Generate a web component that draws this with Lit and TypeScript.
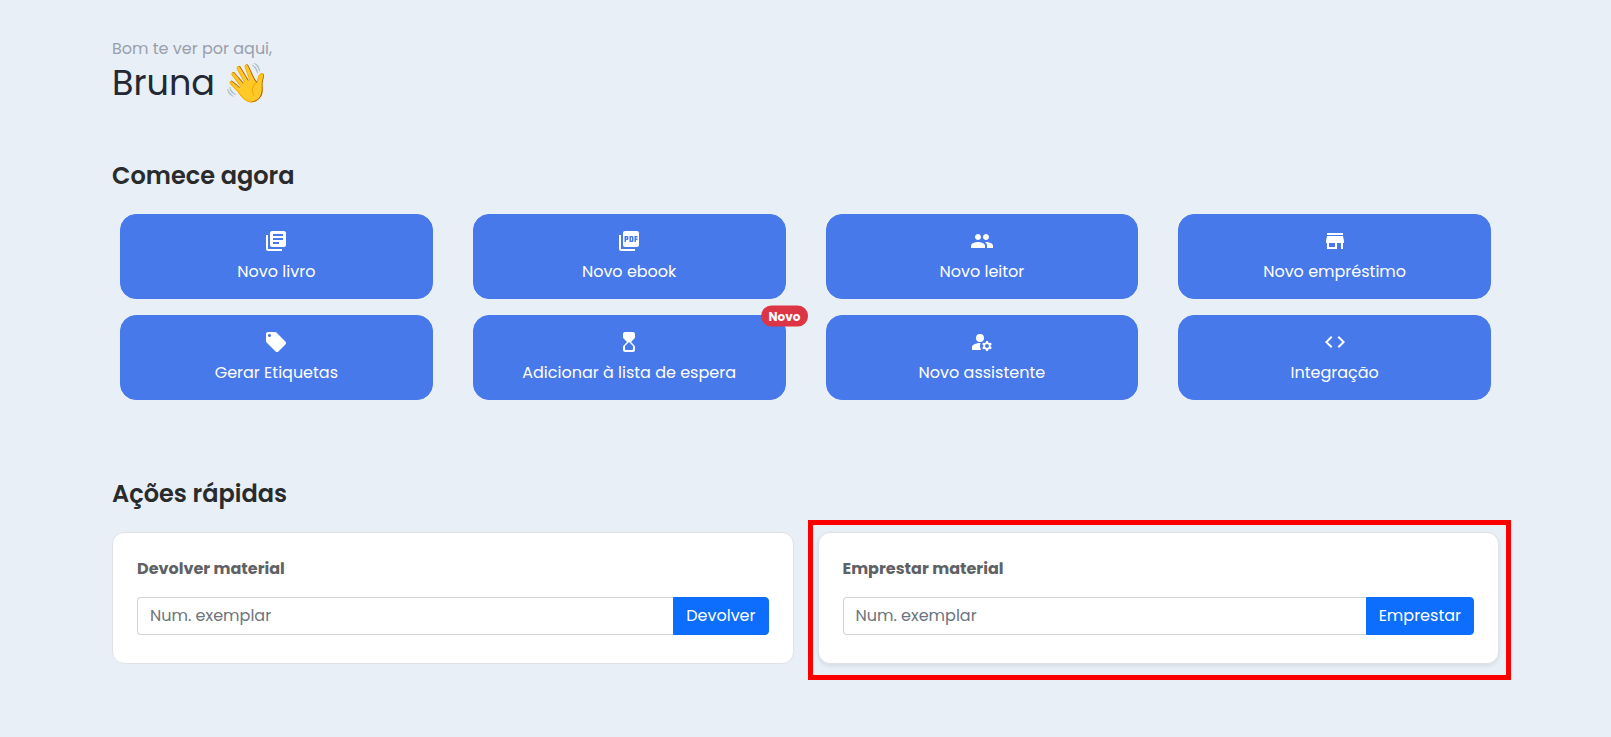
import { LitElement, html, css } from "lit";
import { customElement, property } from "lit/decorators.js";

interface Shortcut {
  label: string;
  icon: string;
  badge?: string;
}

const shortcuts: Shortcut[] = [
  {
    label: "Novo livro",
    icon: "M4 6H2v14c0 1.1.9 2 2 2h14v-2H4V6zM20 2H8c-1.1 0-2 .9-2 2v12c0 1.1.9 2 2 2h12c1.1 0 2-.9 2-2V4c0-1.1-.9-2-2-2zm-1 9H9V9h10v2zm-4 4H9v-2h6v2zm4-8H9V5h10v2z",
  },
  {
    label: "Novo ebook",
    icon: "M20 2H8c-1.1 0-2 .9-2 2v12c0 1.1.9 2 2 2h12c1.1 0 2-.9 2-2V4c0-1.1-.9-2-2-2zm-8.5 7.5c0 .83-.67 1.5-1.5 1.5H9v2H7.5V7H10c.83 0 1.5.67 1.5 1.5v1zm5 2c0 .83-.67 1.5-1.5 1.5h-2.5V7H15c.83 0 1.5.67 1.5 1.5v3zm4-3H19v1h1.5V11H19v2h-1.5V7h3v1.5zM9 9.5h1v-1H9v1zM4 6H2v14c0 1.1.9 2 2 2h14v-2H4V6zm10 5.5h1v-3h-1v3z",
  },
  {
    label: "Novo leitor",
    icon: "M16 11c1.66 0 2.99-1.34 2.99-3S17.66 5 16 5c-1.66 0-3 1.34-3 3s1.34 3 3 3zm-8 0c1.66 0 2.99-1.34 2.99-3S9.66 5 8 5C6.34 5 5 6.34 5 8s1.34 3 3 3zm0 2c-2.33 0-7 1.17-7 3.5V19h14v-2.5c0-2.33-4.67-3.5-7-3.5zm8 0c-.29 0-.62.02-.97.05 1.16.84 1.97 1.97 1.97 3.45V19h6v-2.5c0-2.33-4.67-3.5-7-3.5z",
  },
  {
    label: "Novo empréstimo",
    icon: "M20 4H4v2h16V4zm1 10v-2l-1-5H4l-1 5v2h1v6h10v-6h4v6h2v-6h1zm-9 4H6v-4h6v4z",
  },
  {
    label: "Gerar Etiquetas",
    icon: "M21.41 11.58l-9-9C12.05 2.22 11.55 2 11 2H4c-1.1 0-2 .9-2 2v7c0 .55.22 1.05.59 1.42l9 9c.36.36.86.58 1.41.58.55 0 1.05-.22 1.41-.59l7-7c.37-.36.59-.86.59-1.41 0-.55-.23-1.06-.59-1.42zM5.5 7C4.67 7 4 6.33 4 5.5S4.67 4 5.5 4 7 4.67 7 5.5 6.33 7 5.5 7z",
  },
  {
    label: "Adicionar à lista de espera",
    icon: "M8 22h8c1.1 0 2-.9 2-2l-.01-3.18c0-.53-.21-1.03-.58-1.41L14 12l3.41-3.43c.37-.37.58-.88.58-1.41L18 4c0-1.1-.9-2-2-2H8c-1.1 0-2 .9-2 2v3.16c0 .53.21 1.04.58 1.42L10 12l-3.41 3.4c-.38.38-.59.89-.59 1.42V20c0 1.1.9 2 2 2zm0-5.91l4-4 4 4V19c0 .55-.45 1-1 1H9c-.55 0-1-.45-1-1v-2.91z",
    badge: "Novo",
  },
  {
    label: "Novo assistente",
    icon: "M14 8a4 4 0 1 1-8 0a4 4 0 1 1 8 0zM10.67 13.02C10.45 13.01 10.23 13 10 13c-2.42 0-4.68.67-6.61 1.82-.88.52-1.39 1.5-1.39 2.53V20h9.26c-.79-1.13-1.26-2.51-1.26-4 0-1.07.25-2.07.67-2.98zM20.75 16c0-.22-.03-.42-.06-.63l1.14-1.01-1-1.73-1.45.49c-.32-.27-.68-.48-1.08-.63L18 11h-2l-.3 1.49c-.4.15-.76.36-1.08.63l-1.45-.49-1 1.73 1.14 1.01c-.03.21-.06.41-.06.63s.03.42.06.63l-1.14 1.01 1 1.73 1.45-.49c.32.27.68.48 1.08.63L16 21h2l.3-1.49c.4-.15.76-.36 1.08-.63l1.45.49 1-1.73-1.14-1.01c.03-.21.06-.41.06-.63zM17 18c-1.1 0-2-.9-2-2s.9-2 2-2 2 .9 2 2-.9 2-2 2z",
  },
  {
    label: "Integração",
    icon: "M9.4 16.6L4.8 12l4.6-4.6L8 6l-6 6 6 6 1.4-1.4zm5.2 0l4.6-4.6-4.6-4.6L16 6l6 6-6 6-1.4-1.4z",
  },
];

@customElement("shortcut-tile")
export class ShortcutTile extends LitElement {
  @property() label = "";
  @property() icon = "";
  @property() badge = "";

  static styles = css`
    :host {
      display: block;
    }
    .tile {
      position: relative;
      display: flex;
      flex-direction: column;
      align-items: center;
      gap: 7px;
      width: 100%;
      padding: 14px 15px;
      border: 1px solid #4779eb;
      border-radius: 16px;
      background: #4779eb;
      color: #fff;
      font: inherit;
      cursor: pointer;
    }
    .icon {
      width: 24px;
      height: 24px;
      fill: currentColor;
    }
    .badge {
      position: absolute;
      top: 0;
      left: 100%;
      transform: translate(-50%, -50%);
      padding: 4px 8px;
      border-radius: 16px;
      background: #dc3545;
      font-size: 12px;
      line-height: 13px;
      font-weight: 700;
    }
  `;

  render() {
    return html`<button class="tile" type="button">
      <svg class="icon" viewBox="0 0 24 24" aria-hidden="true"><path d=${this.icon} /></svg>
      <span>${this.label}</span>
      ${this.badge ? html`<span class="badge">${this.badge}</span>` : null}
    </button>`;
  }
}

@customElement("quick-action")
export class QuickAction extends LitElement {
  @property() heading = "";
  @property() action = "";
  @property({ type: Boolean, reflect: true }) active = false;

  static styles = css`
    :host {
      display: block;
      position: relative;
    }
    .card {
      display: flex;
      flex-direction: column;
      gap: 16px;
      padding: 24px 24px 28px;
      border: 1px solid #dee2e6;
      border-radius: 12px;
      background: #fff;
    }
    :host([active]) .card {
      box-shadow: 0 2px 4px rgba(0, 0, 0, 0.08);
    }
    :host([active])::after {
      content: "";
      position: absolute;
      inset: -12px -12px -16px -10px;
      border: 5px solid #fb0000;
      pointer-events: none;
    }
    .heading {
      color: #5f6265;
      font-weight: 700;
    }
    .group {
      display: flex;
    }
    .field {
      flex: 1;
      min-width: 0;
      padding: 6px 12px;
      border: 1px solid #ced4da;
      border-right: 0;
      border-radius: 4px 0 0 4px;
      background: #fff;
      color: #212529;
      font: inherit;
    }
    .field::placeholder {
      color: #6c757d;
      opacity: 1;
    }
    .submit {
      padding: 6px 12px;
      border: 1px solid #0d6efd;
      border-radius: 0 4px 4px 0;
      background: #0d6efd;
      color: #fff;
      font: inherit;
      cursor: pointer;
    }
  `;

  render() {
    return html`<form class="card" @submit=${(e: Event) => e.preventDefault()}>
      <label class="heading" for="copy">${this.heading}</label>
      <div class="group">
        <input class="field" id="copy" type="text" placeholder="Num. exemplar" />
        <button class="submit" type="submit">${this.action}</button>
      </div>
    </form>`;
  }
}

@customElement("app-root")
export class AppRoot extends LitElement {
  static styles = css`
    :host {
      display: block;
      box-sizing: border-box;
      min-height: 100vh;
      padding: 37px 112px 72px;
      background: #e8eff7;
      color: #292b2c;
      font: 400 16px/24px Poppins, Inter, sans-serif;
    }
    .welcome,
    .name,
    .title {
      margin: 0;
    }
    .welcome {
      color: #9a9fab;
    }
    .name {
      display: flex;
      align-items: center;
      gap: 8px;
      color: #242834;
      font-size: 35px;
      line-height: 44px;
      font-weight: 400;
    }
    .wave {
      font-size: 38px;
    }
    .title {
      font-size: 24px;
      line-height: 32px;
      font-weight: 600;
    }
    .section {
      margin-top: 55px;
    }
    .quick {
      margin-top: 78px;
    }
    .tiles {
      display: grid;
      grid-template-columns: repeat(4, 1fr);
      gap: 16px 40px;
      margin-top: 22px;
      padding: 0 8px;
    }
    .cards {
      display: grid;
      grid-template-columns: repeat(2, 1fr);
      gap: 24px;
      margin-top: 22px;
    }
  `;

  render() {
    return html`
      <header>
        <p class="welcome">Bom te ver por aqui,</p>
        <h1 class="name">Bruna <span class="wave">👋</span></h1>
      </header>
      <section class="section">
        <h2 class="title">Comece agora</h2>
        <div class="tiles">
          ${shortcuts.map(
            (s) => html`<shortcut-tile .label=${s.label} .icon=${s.icon} .badge=${s.badge ?? ""}></shortcut-tile>`
          )}
        </div>
      </section>
      <section class="quick">
        <h2 class="title">Ações rápidas</h2>
        <div class="cards">
          <quick-action heading="Devolver material" action="Devolver"></quick-action>
          <quick-action heading="Emprestar material" action="Emprestar" active></quick-action>
        </div>
      </section>
    `;
  }
}
